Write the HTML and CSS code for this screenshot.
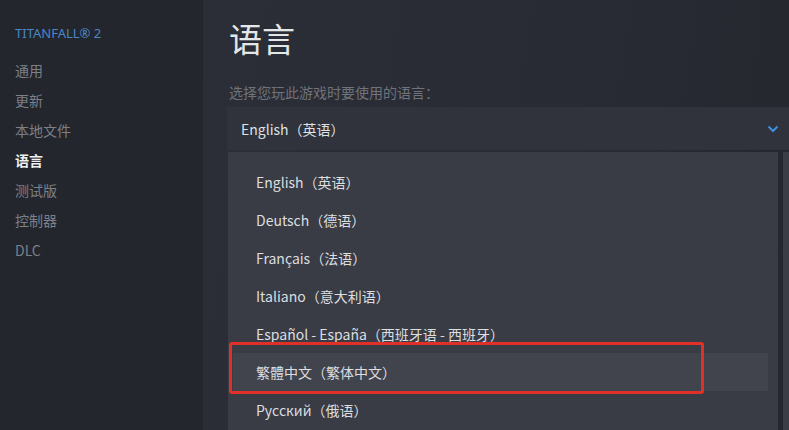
FILE: index.html
```html
<!DOCTYPE html>
<html lang="zh-CN">
  <head>
    <meta charset="UTF-8" />
    <meta name="viewport" content="width=device-width, initial-scale=1.0" />
    <title>语言</title>
    <link rel="stylesheet" href="styles.css">
  </head>
  <body>
    <div class="page">
      <div class="sidebar">
        <div class="game">TITANFALL® 2</div>
        <div class="nav">
          <div>通用</div>
          <div>更新</div>
          <div>本地文件</div>
          <div class="active">语言</div>
          <div>测试版</div>
          <div>控制器</div>
          <div>DLC</div>
        </div>
      </div>
      <div class="main">
        <h1>语言</h1>
        <div class="label">选择您玩此游戏时要使用的语言：</div>
        <div class="select">
          <span>English（英语）</span>
          <svg width="12" height="8" viewBox="0 0 12 8"><path d="M1.5 1.5 L6 6 L10.5 1.5" fill="none" stroke="#3d8fe0" stroke-width="2"/></svg>
        </div>
        <div class="drop">
          <div class="list">
            <div class="item">English（英语）</div>
            <div class="item">Deutsch（德语）</div>
            <div class="item">Français（法语）</div>
            <div class="item">Italiano（意大利语）</div>
            <div class="item">Español - España（西班牙语 - 西班牙）</div>
            <div class="item hover">繁體中文（繁体中文）<div class="mark"></div></div>
            <div class="item">Русский（俄语）</div>
          </div>
          <div class="track"></div>
        </div>
      </div>
    </div>
  </body>
</html>
```
FILE: styles.css
```css
body {
    margin: 0;
    background: #24272e;
    font-family: "Noto Sans CJK SC", "Noto Sans", sans-serif;
    overflow: hidden;
}
.page {
    display: flex;
    height: 430px;
}
.sidebar {
    width: 205px;
    background: #23262d;
    border-right: 2px solid #2a2d35;
    padding: 25px 0 0 15px;
    box-sizing: border-box;
    flex-shrink: 0;
}
.game {
    color: #4a86c6;
    font-family: "Noto Sans", sans-serif;
    font-size: 13px;
    line-height: 16px;
    margin-bottom: 14px;
}
.nav div {
    color: #7b8089;
    font-size: 14px;
    line-height: 30px;
}
.nav .active {
    color: #eef0f2;
    font-weight: bold;
}
.main {
    flex: 1;
    background: linear-gradient(100deg, #2b2e37 0%, #282b33 60%, #24272e 100%);
    padding-left: 22px;
}
h1 {
    margin: 16px 0 0 2px;
    font-size: 33px;
    font-weight: normal;
    line-height: 44px;
    color: #e4e6e8;
}
.label {
    margin: 22px 0 0 2px;
    font-size: 14px;
    line-height: 20px;
    color: #6e737c;
}
.select {
    margin-top: 5px;
    height: 43px;
    background: #30333b;
    display: flex;
    align-items: center;
    justify-content: space-between;
    padding: 0 10px 0 14px;
    color: #dfe1e3;
    font-size: 14px;
}
.drop {
    display: flex;
    margin-top: 2px;
    margin-left: 1px;
    height: 280px;
}
.list {
    flex: 1;
    background: #393c44;
    padding: 11px 10px 0 5px;
}
.item {
    position: relative;
    height: 38px;
    line-height: 38px;
    padding-left: 23px;
    color: #dcdee0;
    font-size: 14px;
}
.item.hover {
    background: #41444c;
}
.mark {
    position: absolute;
    left: -4px;
    top: -11px;
    width: 475px;
    height: 52px;
    border: 3px solid #e0302a;
    border-radius: 3px;
    box-sizing: border-box;
}
.track {
    width: 6px;
    margin-left: 5px;
    background: #3a3d45;
}
```
